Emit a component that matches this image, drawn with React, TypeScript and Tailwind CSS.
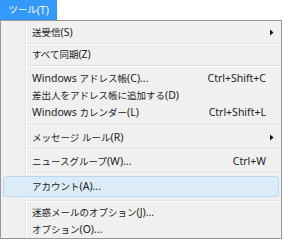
import React from "react";

type Entry =
  | { kind: "item"; label: string; shortcut?: string; sub?: boolean; h: number; hover?: boolean }
  | { kind: "sep"; h: number };

const entries: Entry[] = [
  { kind: "item", label: "送受信(S)", sub: true, h: 18 },
  { kind: "sep", h: 5 },
  { kind: "item", label: "すべて同期(Z)", h: 17 },
  { kind: "sep", h: 6 },
  { kind: "item", label: "Windows アドレス帳(C)...", shortcut: "Ctrl+Shift+C", h: 18 },
  { kind: "item", label: "差出人をアドレス帳に追加する(D)", h: 17 },
  { kind: "item", label: "Windows カレンダー(L)", shortcut: "Ctrl+Shift+L", h: 17 },
  { kind: "sep", h: 7 },
  { kind: "item", label: "メッセージ ルール(R)", sub: true, h: 18 },
  { kind: "sep", h: 6 },
  { kind: "item", label: "ニュースグループ(W)...", shortcut: "Ctrl+W", h: 18 },
  { kind: "sep", h: 6 },
  { kind: "item", label: "アカウント(A)...", h: 21, hover: true },
  { kind: "sep", h: 7 },
  { kind: "item", label: "迷惑メールのオプション(J)...", h: 17 },
  { kind: "item", label: "オプション(O)...", h: 16 },
];

// Japanese runs are set a touch smaller than the Latin ones, like Meiryo UI
function Label({ text }: { text: string }) {
  const parts = text.split(/([\u3000-\u9fff\uff00-\uffef]+)/);
  return (
    <>
      {parts.map((p, i) =>
        /[\u3000-\u9fff\uff00-\uffef]/.test(p) ? (
          <span key={i} className="text-[9.5px]">{p}</span>
        ) : (
          <span key={i}>{p}</span>
        )
      )}
    </>
  );
}

function Arrow() {
  return (
    <svg width="4" height="7" viewBox="0 0 4 7" className="block mr-[-8px]">
      <path d="M0 0.5 L3.5 3.5 L0 6.5 Z" fill="#111" />
    </svg>
  );
}

export default function App() {
  return (
    <div className="w-[284px] h-[240px] bg-white overflow-hidden text-[10.5px] text-[#222] font-['Noto_Sans','Noto_Sans_CJK_JP',sans-serif]">
      {/* menu bar */}
      <div className="h-[20px] flex">
        <div className="w-[57px] h-[20px] bg-[#3399ff] text-white flex items-center justify-center leading-none">
          <Label text="ツール(T)" />
        </div>
      </div>

      {/* dropdown */}
      <div className="w-[282px] h-[219px] border border-[#979797] bg-[#f0f0f0] relative flex flex-col pt-[2px]">
        {/* gutter line */}
        <div className="absolute top-0 bottom-0 left-[24px] w-[2px] border-l border-[#e2e3e3] border-r-white border-r" />
        {entries.map((e, i) =>
          e.kind === "sep" ? (
            <div key={i} className="flex items-center pl-[26px] pr-[1px]" style={{ height: e.h }}>
              <div className="w-full h-[2px] border-t border-[#e0e0e0] border-b border-b-white" />
            </div>
          ) : (
            <div key={i} className="px-[2px] flex" style={{ height: e.h }}>
              <div
                className={
                  "relative flex-1 flex items-center pl-[28px] pr-[12px] leading-none rounded-[3px] " +
                  (e.hover ? "bg-[#dcebf8] border border-[#b9d7f1]" : "border border-transparent")
                }
              >
                <span className="flex-1 whitespace-nowrap">
                  <Label text={e.label} />
                </span>
                {e.shortcut && <span className="whitespace-nowrap">{e.shortcut}</span>}
                {e.sub && <Arrow />}
              </div>
            </div>
          )
        )}
      </div>
    </div>
  );
}
